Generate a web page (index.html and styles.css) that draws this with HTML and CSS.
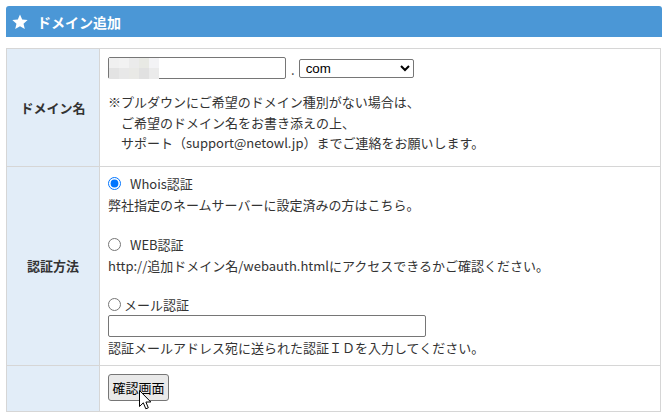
FILE: index.html
```html
<!DOCTYPE html>
<html lang="ja">
<head>
<meta charset="utf-8">
<title>ドメイン追加</title>
<link rel="stylesheet" href="styles.css">
</head>
<body>
<div class="panel">
  <h2 class="panel-title">
    <svg class="star" width="16" height="16" viewBox="0 0 24 24" aria-hidden="true"><path d="M12 0.8l3.3 7.6 8.2 .7-6.2 5.4 1.9 8.1L12 18.4l-7.2 4.2 1.9-8.1L.5 9.1l8.2-.7z" fill="#fff"/></svg>
    <span>ドメイン追加</span>
  </h2>
  <table class="form-table">
    <tr class="row-domain">
      <th>ドメイン名</th>
      <td>
        <div class="domain-line">
          <span class="masked">
            <input class="domain-input" type="text">
            <span class="mosaic" aria-hidden="true">
              <i class="m1"></i><i class="m2"></i><i class="m3"></i><i class="m4"></i><i class="m5"></i>
              <i class="m6"></i><i class="m7"></i><i class="m8"></i><i class="m9"></i><i class="m10"></i>
            </span>
          </span>
          <span class="dot">.</span>
          <select class="tld">
            <option>com</option>
            <option>net</option>
            <option>jp</option>
          </select>
        </div>
        <div class="note">
          <p>※プルダウンにご希望のドメイン種別がない場合は、</p>
          <p>　ご希望のドメイン名をお書き添えの上、</p>
          <p>　サポート（support@netowl.jp）までご連絡をお願いします。</p>
        </div>
      </td>
    </tr>
    <tr class="row-method">
      <th>認証方法</th>
      <td class="methods">
        <div class="opt">
          <label class="opt-line"><input type="radio" name="auth" checked><span class="opt-name wide">Whois認証</span></label>
          <p class="opt-desc">弊社指定のネームサーバーに設定済みの方はこちら。</p>
        </div>
        <div class="opt">
          <label class="opt-line"><input type="radio" name="auth"><span class="opt-name wide">WEB認証</span></label>
          <p class="opt-desc">http://追加ドメイン名/webauth.htmlにアクセスできるかご確認ください。</p>
        </div>
        <div class="opt opt-mail">
          <label class="opt-line"><input type="radio" name="auth"><span class="opt-name">メール認証</span></label>
          <input class="mail-input" type="text">
          <p class="opt-desc">認証メールアドレス宛に送られた認証ＩＤを入力してください。</p>
        </div>
      </td>
    </tr>
    <tr class="row-submit">
      <th></th>
      <td>
        <span class="btn-wrap">
          <button class="btn" type="button">確認画面</button>
          <svg class="cursor" width="13" height="20" viewBox="0 0 13 20" aria-hidden="true"><path d="M0.5 0.5 L0.5 16.5 L4.3 12.8 L6.8 18.8 L9.3 17.8 L6.9 12 L11.8 12 Z" fill="#fff" stroke="#000" stroke-width="1" stroke-linejoin="miter"/></svg>
        </span>
      </td>
    </tr>
  </table>
</div>
</body>
</html>
```

FILE: styles.css
```css
* { box-sizing: border-box; }

body {
  margin: 6px;
  background: #fff;
  color: #333;
  font-family: "Noto Sans CJK JP", "Noto Sans", sans-serif;
  font-size: 13px;
}

p { margin: 0; }

.panel-title {
  margin: 0;
  height: 31px;
  background: #4b97d6;
  border-radius: 3px 3px 0 0;
  color: #fff;
  font-size: 14px;
  font-weight: bold;
  display: flex;
  align-items: center;
  padding-left: 6px;
}

.star { margin-right: 9px; }

.form-table {
  margin-top: 11px;
  width: 655px;
  border-collapse: collapse;
  border: 1px solid #d6d6d6;
}

.form-table th,
.form-table td {
  border: 1px solid #d6d6d6;
}

.form-table th {
  width: 93px;
  background: #e2edf8;
  font-weight: bold;
  font-size: 13px;
  text-align: center;
  vertical-align: middle;
  color: #333;
}

.form-table td {
  text-align: left;
  vertical-align: top;
}

.row-domain td { padding: 8px 8px 12px; }

.domain-line {
  display: flex;
  align-items: center;
  height: 22px;
}

.masked {
  position: relative;
  display: block;
  width: 178px;
  height: 22px;
}

.domain-input,
.mail-input {
  display: block;
  height: 22px;
  border: 1px solid #767676;
  border-radius: 2px;
  padding: 1px 2px;
  margin: 0;
  background: #fff;
  font: 13px "Liberation Sans", sans-serif;
}

.domain-input { width: 178px; }

.mosaic {
  position: absolute;
  left: 1px;
  top: 1px;
  display: grid;
  grid-template-columns: repeat(5, 10px);
  grid-template-rows: 10px 11px;
}

.mosaic i { display: block; }
.m1 { background: #f0f0f0; }
.m2 { background: #f2f2f2; }
.m3 { background: #ebebeb; }
.m4 { background: #e8e9e4; }
.m5 { background: #f3f3f5; }
.m6 { background: #e3e3e3; }
.m7 { background: #e8e8e8; }
.m8 { background: #e9e9e6; }
.m9 { background: #e1e1e1; }
.m10 { background: #ebebeb; }

.dot {
  margin: 0 4px 0 5px;
  font-size: 13px;
  line-height: 20px;
  padding-top: 3px;
}

.tld {
  width: 115px;
  height: 19px;
  margin: 1px 0 0;
  padding: 0 2px;
  border: 1px solid #767676;
  border-radius: 2px;
  background: #fff;
  color: #000;
  font: 13.33px "Liberation Sans", sans-serif;
}

.note {
  margin-top: 13px;
  line-height: 20.5px;
}

.methods { padding: 7px 8px 7px; }

.opt + .opt { margin-top: 20px; }
.opt.opt-mail { margin-top: 19px; }

.opt-line {
  display: flex;
  align-items: center;
  height: 20px;
}

.opt-mail .opt-line { height: 19px; }

.opt-line input[type="radio"] {
  width: 13px;
  height: 13px;
  margin: 0 3px 0 0;
}

.opt-name.wide { margin-left: 6px; }

.opt-desc { line-height: 21px; }

.mail-input {
  width: 318px;
  margin-top: 1px;
}

.row-submit td { padding: 8px 8px 9px; }
.row-submit th { height: 46px; }

.btn-wrap {
  position: relative;
  display: inline-block;
  vertical-align: top;
}

.btn {
  display: block;
  width: 61px;
  height: 27px;
  padding: 0 2px;
  margin: 0;
  border: 1px solid #767676;
  border-radius: 3px;
  background: #e9e9e9;
  color: #000;
  white-space: nowrap;
  font: 13px "Noto Sans CJK JP", sans-serif;
}

.cursor {
  position: absolute;
  left: 31px;
  top: 16px;
}
```
